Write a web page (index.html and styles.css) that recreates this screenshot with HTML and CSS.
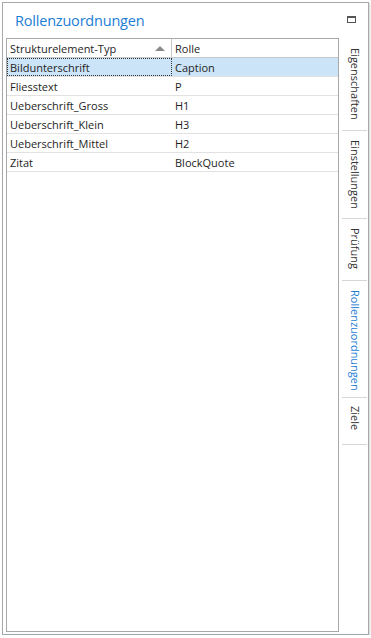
FILE: index.html
```html
<!doctype html>
<html lang="de">
<head>
	<meta charset="UTF-8">
	<title>Rollenzuordnungen</title>
	<link rel="stylesheet" href="styles.css">
</head>
<body>
	<div class="panel">
		<div class="head">
			<span class="title">Rollenzuordnungen</span>
			<span class="maxbtn"></span>
		</div>
		<div class="body">
			<div class="grid">
				<div class="row hrow">
					<div class="cell c1">Strukturelement-Typ<span class="sort"></span></div>
					<div class="cell c2">Rolle</div>
				</div>
				<div class="row sel">
					<div class="cell c1 focus">Bildunterschrift</div>
					<div class="cell c2">Caption</div>
				</div>
				<div class="row">
					<div class="cell c1">Fliesstext</div>
					<div class="cell c2">P</div>
				</div>
				<div class="row">
					<div class="cell c1">Ueberschrift_Gross</div>
					<div class="cell c2">H1</div>
				</div>
				<div class="row">
					<div class="cell c1">Ueberschrift_Klein</div>
					<div class="cell c2">H3</div>
				</div>
				<div class="row">
					<div class="cell c1">Ueberschrift_Mittel</div>
					<div class="cell c2">H2</div>
				</div>
				<div class="row">
					<div class="cell c1">Zitat</div>
					<div class="cell c2">BlockQuote</div>
				</div>
			</div>
			<div class="tabs">
				<div class="tab t1">Eigenschaften</div>
				<div class="tab t2">Einstellungen</div>
				<div class="tab t3">Prüfung</div>
				<div class="tab t4 active">Rollenzuordnungen</div>
				<div class="tab t5">Ziele</div>
			</div>
		</div>
	</div>
</body>
</html>
```

FILE: styles.css
```css
*{
	padding:0;
	margin:0;
	box-sizing:border-box;
}
body{
	background:#fff;
	font-family:"Open Sans","Noto Sans",sans-serif;
	color:#1e1e1e;
}
.panel{
	margin:2px 0 0 2px;
	width:367px;
	height:633px;
	border:1px solid #a8a8a8;
	box-shadow:1px 1px 2px rgba(0,0,0,.18);
	display:flex;
	flex-direction:column;
}
.head{
	height:35px;
	display:flex;
	align-items:center;
	padding:0 12px 0 12px;
	justify-content:space-between;
}
.title{
	color:#1c7dd4;
	font-size:14.5px;
	letter-spacing:-0.2px;
	margin-top:-1px;
}
.maxbtn{
	width:9px;
	height:7px;
	border:1px solid #555;
	border-top-width:2px;
	margin-top:-3px;
}
.body{
	flex:1;
	display:flex;
	padding:0 0 2px 3px;
}
.grid{
	width:333px;
	border:1px solid #a8a8a8;
	font-size:11px;
}
.row{
	display:flex;
	height:19px;
	border-bottom:1px solid #e2e2e2;
	align-items:center;
}
.hrow{
	border-bottom-color:#c8c8c8;
}
.cell{
	height:100%;
	display:flex;
	align-items:center;
	padding-left:3px;
	position:relative;
}
.c1{
	width:165px;
}
.c2{
	flex:1;
}
.hrow .c1{
	border-right:1px solid #c8c8c8;
}
.sort{
	position:absolute;
	right:6px;
	top:7px;
	border-left:5px solid transparent;
	border-right:5px solid transparent;
	border-bottom:5px solid #8a8a8a;
}
.sel{
	background:#cce4f7;
}
.focus{
	outline:1px dotted #333;
	outline-offset:-1px;
}
.tabs{
	width:25px;
	margin-left:3px;
	display:flex;
	flex-direction:column;
}
.tab{
	writing-mode:vertical-rl;
	font-size:11px;
	color:#333;
	display:flex;
	align-items:center;
	border-bottom:1px solid #d6d6d6;
	padding-left:2px;
	padding-top:9px;
}
.tab.active{
	color:#1c7dd4;
}
.t1{ height:93px; padding-top:10px; }
.t2{ height:88px; }
.t3{ height:62px; }
.t4{ height:117px; }
.t5{ height:47px; padding-top:8px; }
```
